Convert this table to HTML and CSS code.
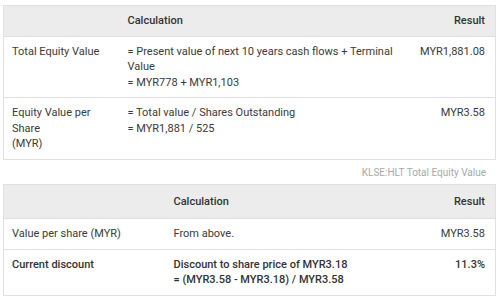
FILE: index.html
```html
<!DOCTYPE html>
<html>
<head>
<meta charset="utf-8">
<link rel="stylesheet" href="styles.css">
</head>
<body>
<div class="page">
  <table class="calc calc-a">
    <colgroup><col class="a1"><col class="a2"><col class="a3"></colgroup>
    <thead>
      <tr><th></th><th>Calculation</th><th class="num">Result</th></tr>
    </thead>
    <tbody>
      <tr>
        <td>Total Equity Value</td>
        <td>= Present value of next 10 years cash flows + Terminal Value<br>= MYR778 + MYR1,103</td>
        <td class="num">MYR1,881.08</td>
      </tr>
      <tr>
        <td>Equity Value per Share<br>(MYR)</td>
        <td>= Total value / Shares Outstanding<br>= MYR1,881 / 525</td>
        <td class="num">MYR3.58</td>
      </tr>
    </tbody>
  </table>
  <div class="caption">KLSE:HLT Total Equity Value</div>
  <table class="calc calc-b">
    <colgroup><col class="b1"><col class="b2"><col class="b3"></colgroup>
    <thead>
      <tr><th></th><th>Calculation</th><th class="num">Result</th></tr>
    </thead>
    <tbody>
      <tr>
        <td>Value per share (MYR)</td>
        <td>From above.</td>
        <td class="num">MYR3.58</td>
      </tr>
      <tr class="strong">
        <td>Current discount</td>
        <td>Discount to share price of MYR3.18<br>= (MYR3.58 - MYR3.18) / MYR3.58</td>
        <td class="num">11.3%</td>
      </tr>
    </tbody>
  </table>
</div>
</body>
</html>
```
FILE: styles.css
```css
html, body {
  margin: 0;
  padding: 0;
  background: #ffffff;
}
body {
  font-family: Roboto, "Liberation Sans", sans-serif;
  font-size: 11px;
  line-height: 15.5px;
  color: #3a3a3a;
}
.page {
  padding: 5px 4px 0 3px;
}
.calc {
  width: 100%;
  border-collapse: collapse;
  table-layout: fixed;
  border: 1px solid #e0e0e0;
}
.calc th, .calc td {
  text-align: left;
  vertical-align: top;
  padding: 7px 10px 7px 8px;
  border-top: 1px solid #e0e0e0;
}
.calc th {
  background: #ececec;
  font-weight: 500;
  color: #333;
}
.calc .num {
  text-align: right;
}
.a1 { width: 116px; }
.a3 { width: 86px; }
.b1 { width: 162px; }
.b3 { width: 86px; }
.calc-b th {
  padding-top: 9px;
  padding-bottom: 9px;
}
.strong td {
  font-weight: 500;
  color: #333;
}
.caption {
  text-align: right;
  font-size: 10px;
  color: #a8a8a8;
  padding: 7px 10px 5px 0;
  line-height: 12px;
}
```
